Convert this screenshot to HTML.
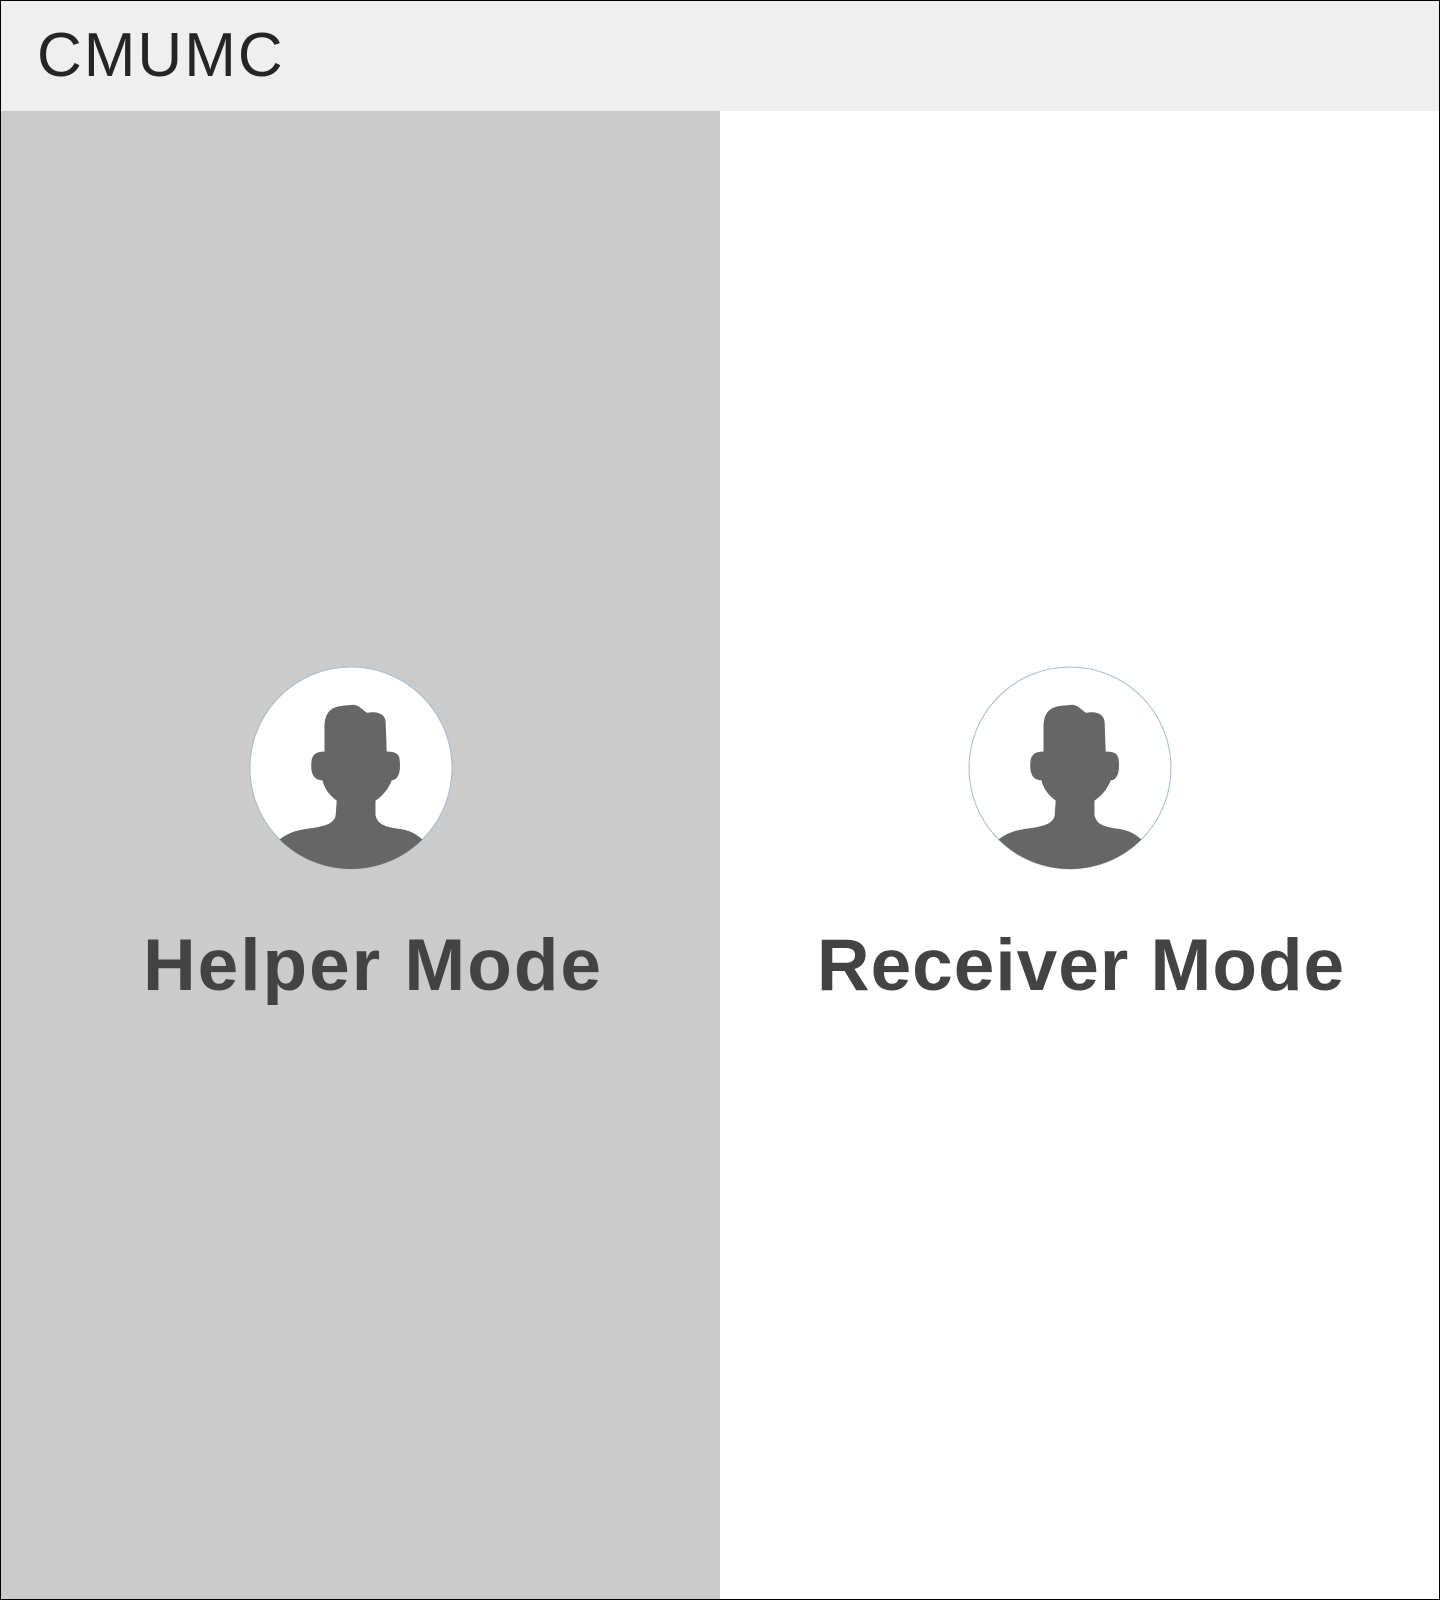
<!DOCTYPE html>
<html><head><meta charset="utf-8"><style>
*{margin:0;padding:0;box-sizing:border-box}
html,body{width:1440px;height:1600px;overflow:hidden;background:#fff;font-family:"Liberation Sans",sans-serif}
.page{position:absolute;left:0;top:0;width:1440px;height:1600px;border:1px solid #000}
.hdr{position:absolute;left:0;top:0;width:1440px;height:111px;background:#efefef;border:1px solid #000;border-bottom:none}
.hdr span{position:absolute;left:36px;top:19px;font-size:62px;letter-spacing:2px;color:#252525}
.left{position:absolute;left:1px;top:111px;width:719px;height:1488px;background:#cbcbcb}
.av{position:absolute;top:666px;width:204px;height:204px}
.lbl{position:absolute;top:924px;width:700px;text-align:center;font-weight:bold;font-size:73px;letter-spacing:1px;color:#434343}
</style></head><body>
<div class="page"></div>
<div class="left"></div>
<div class="hdr"><span>CMUMC</span></div>
<svg class="av" style="left:249px" viewBox="0 0 200 200"><defs><clipPath id="c1"><circle cx="100" cy="100" r="99"/></clipPath></defs>
<circle cx="100" cy="100" r="99" fill="#fff" stroke="#a9bccf" stroke-width="1"/>
<g clip-path="url(#c1)" fill="#666"><path d="M74 60 C74 44 82 40 92 39 L102 38 C108 38 112 44 116 46 C124 44 134 46 134 56 L135 84 C147 84 148 88 148 98 C148 108 144 112 140 112 C136 122 130 128 124 132 L124 146 C126 156 134 158 150 160 C160 162 166 166 172 172 L172 210 L28 210 L28 172 C34 166 42 162 54 160 C70 158 84 156 85 146 L86 132 C78 126 74 120 72 112 C64 112 61 106 61 98 C61 88 64 84 74 84 Z"/></g></svg>
<svg class="av" style="left:968px" viewBox="0 0 200 200"><defs><clipPath id="c2"><circle cx="100" cy="100" r="99"/></clipPath></defs>
<circle cx="100" cy="100" r="99" fill="#fff" stroke="#a9bccf" stroke-width="1"/>
<g clip-path="url(#c2)" fill="#666"><path d="M74 60 C74 44 82 40 92 39 L102 38 C108 38 112 44 116 46 C124 44 134 46 134 56 L135 84 C147 84 148 88 148 98 C148 108 144 112 140 112 C136 122 130 128 124 132 L124 146 C126 156 134 158 150 160 C160 162 166 166 172 172 L172 210 L28 210 L28 172 C34 166 42 162 54 160 C70 158 84 156 85 146 L86 132 C78 126 74 120 72 112 C64 112 61 106 61 98 C61 88 64 84 74 84 Z"/></g></svg>
<div class="lbl" style="left:23px;letter-spacing:2px">Helper Mode</div>
<div class="lbl" style="left:731px">Receiver Mode</div>
</body></html>
